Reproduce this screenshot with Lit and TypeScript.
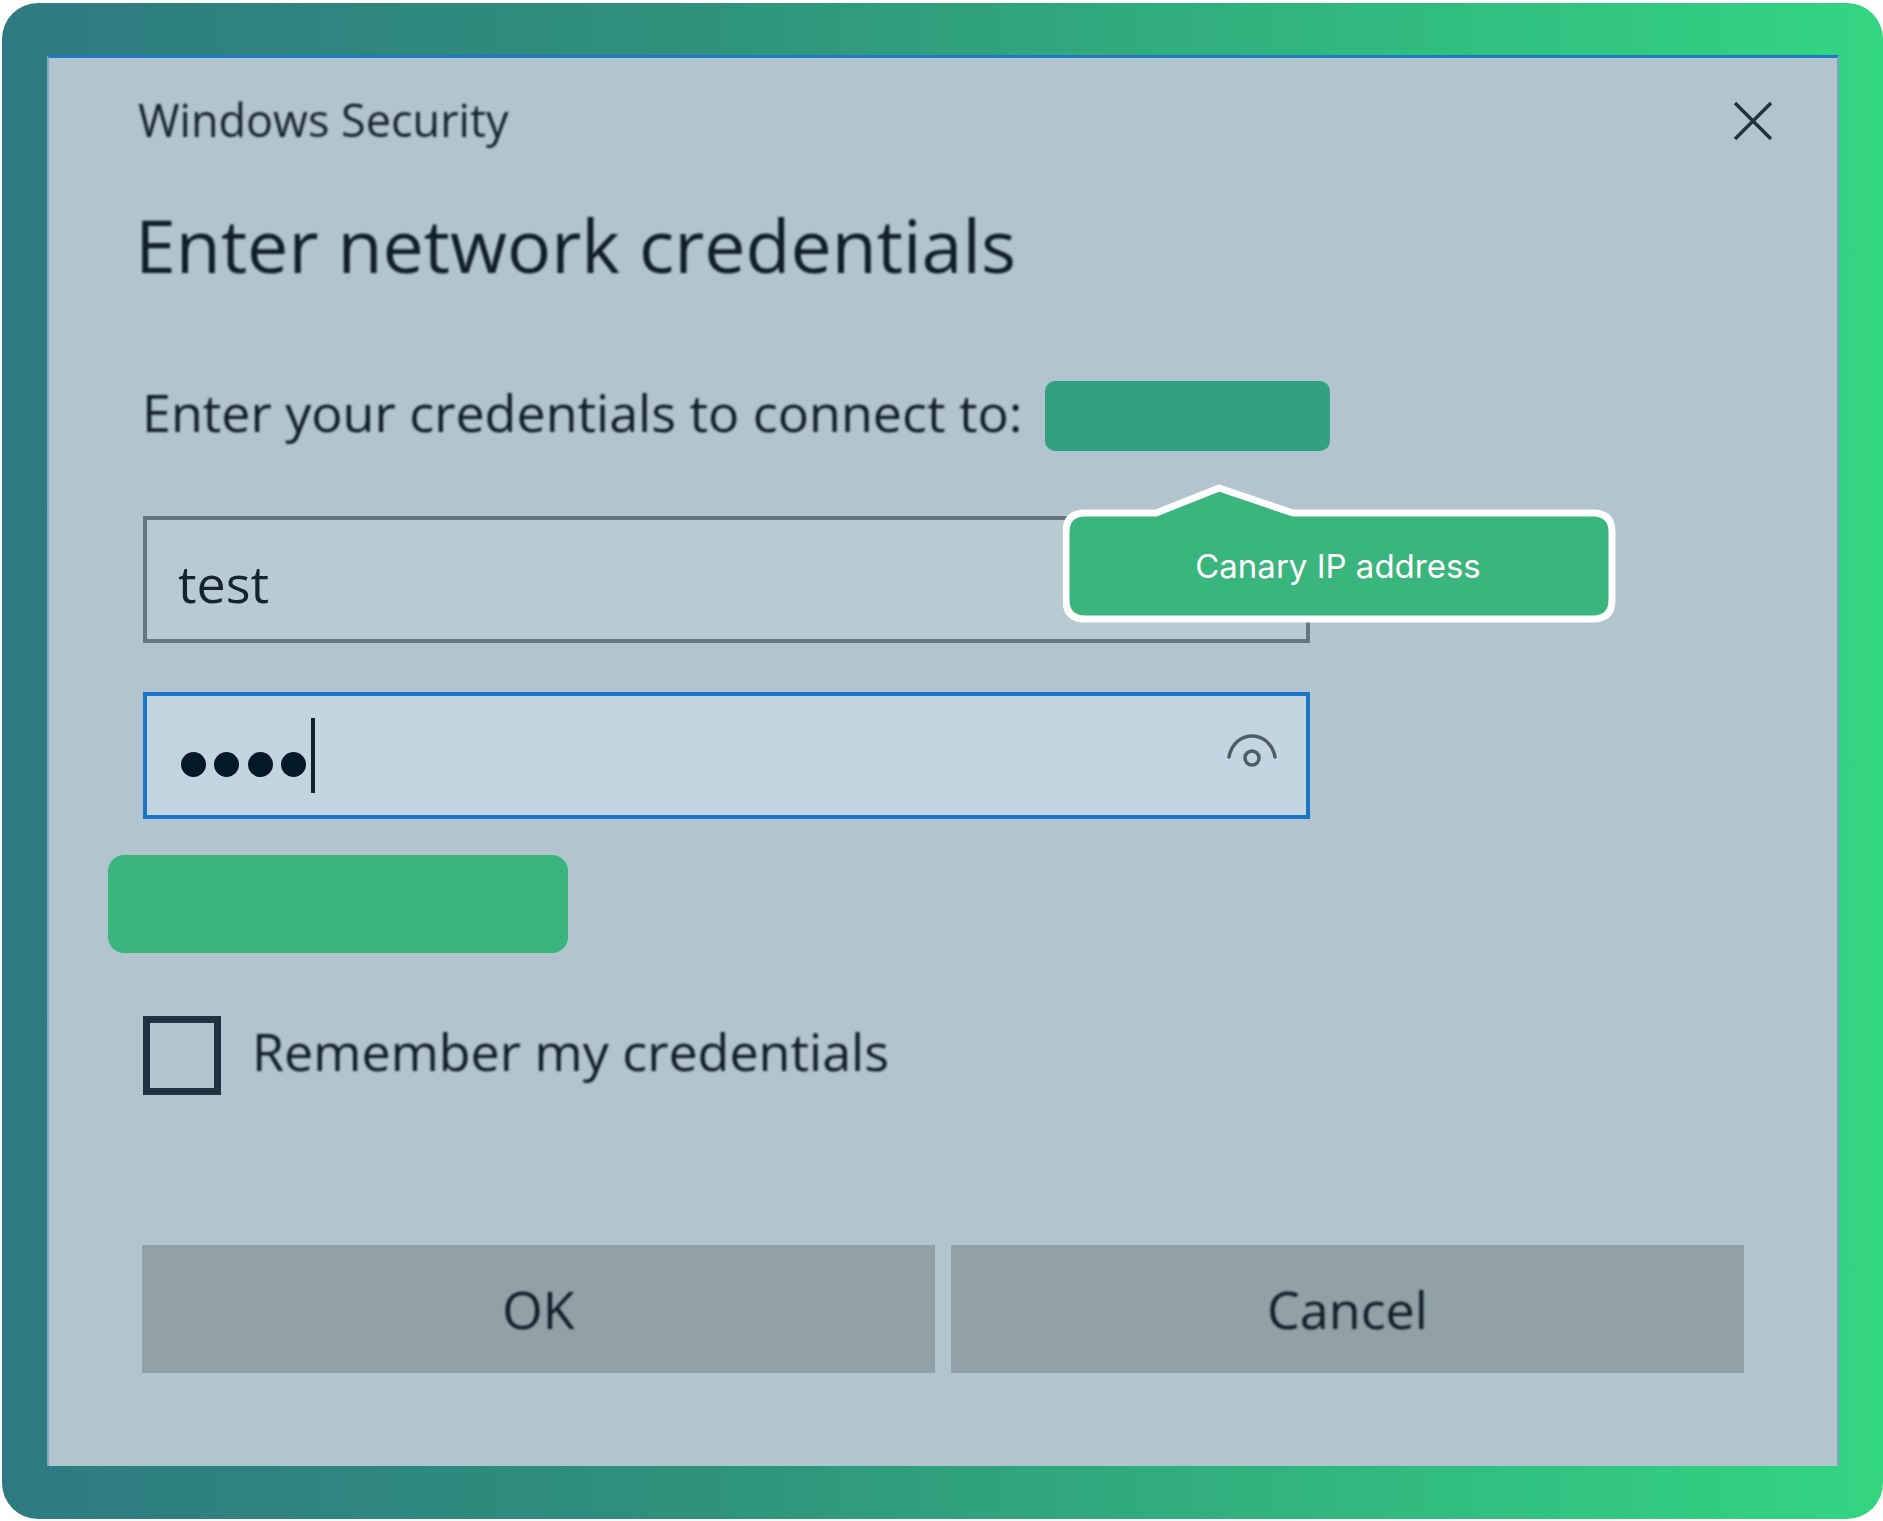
import { LitElement, html, css } from "lit";
import { customElement } from "lit/decorators.js";

@customElement("app-root")
export class AppRoot extends LitElement {
  static styles = css`
    :host { display: block; width: 1883px; height: 1521px; background: #fff; box-sizing: border-box; padding: 3px 0 2px 2px; font-family: "Open Sans", "Noto Sans", sans-serif; color: #15252f; }
    .frame { height: 100%; box-sizing: border-box; border-radius: 36px; padding: 52px 44px 53px 45px; background: linear-gradient(90deg, #2e7a82 0%, #2f907c 35%, #33d681 100%); }
    .win { position: relative; height: 100%; box-sizing: border-box; background: #b2c4ce; border-top: 3px solid #1f78c4; border-left: 2px solid #7da7c6; border-right: 2px solid #7da7c6; padding: 0 92px 0 94px; display: flex; flex-direction: column; }
    .title-row { display: flex; justify-content: space-between; align-items: center; height: 124px; }
    .win-title { font-size: 45px; margin-left: -5px; margin-bottom: 2px; filter: blur(.8px); }
    .close { width: 44px; height: 44px; margin-right: -30px; margin-top: 2px; color: #22333e; filter: blur(.6px); }
    h1 { margin: 18px 0 0 -8px; font-weight: 400; font-size: 73.5px; line-height: 90px; color: #0f1f29; filter: blur(.8px); }
    .prompt-row { display: flex; align-items: center; height: 70px; margin-top: 91px; }
    .prompt { font-size: 52px; filter: blur(.8px); width: 902px; white-space: nowrap; margin-bottom: 10px; text-indent: -1px; color: #0f1f29; }
    .red1 { width: 285px; height: 70px; background: #31a181; border-radius: 10px; }
    .inputs { width: 1167px; margin-top: 65px; display: flex; flex-direction: column; gap: 49px; }
    .input { height: 127px; box-sizing: border-box; display: flex; align-items: center; position: relative; }
    .input.user { background: #b8cbd2; border: 4px solid #66767f; font-size: 52px; padding-left: 31px; padding-top: 5px; }
    .input.user span { filter: blur(.7px); }
    .input.pass { background: #c3d5e0; border: 4px solid #1a75c4; gap: 8.5px; padding-left: 33.5px; }
    .dot { width: 25px; height: 25px; border-radius: 50%; background: #051a27; margin-top: 17px; filter: blur(.5px); }
    .caret { width: 4px; height: 75px; background: #10222e; margin-left: -4px; }
    .eye { position: absolute; right: 27px; top: 36px; width: 54px; height: 46px; color: #4e5d66; filter: blur(.7px); }
    .red2 { width: 460px; height: 98px; margin: 36px 0 0 -35px; background: #3bb57e; border-radius: 16px; }
    .remember { display: flex; align-items: center; gap: 32px; margin-top: 62px; font-size: 52px; }
    .box { width: 64px; height: 65px; border: 7px solid #1f3340; flex: none; filter: blur(.5px); }
    .remember span { filter: blur(.8px); margin-bottom: 10px; text-indent: -1px; color: #0f1f29; }
    .buttons { display: flex; gap: 16px; margin-top: auto; margin-bottom: 93px; margin-left: -1px; }
    .btn { width: 793px; height: 128px; background: #90a2a8; display: flex; align-items: center; justify-content: center; font-size: 52px; }
    .btn span { filter: blur(.8px); margin-bottom: 2px; color: #0f1f29; }
    .callout { position: absolute; left: 1014px; top: 426px; width: 554px; height: 140px; }
    .callout svg { position: absolute; inset: 0; width: 100%; height: 100%; }
    .callout div { position: absolute; left: 0; right: 4px; top: 26px; height: 111px; display: flex; align-items: center; justify-content: center; color: #fff; font-family: Inter, "Liberation Sans", sans-serif; font-size: 33px; }
  `;

  render() {
    return html`
      <div class="frame">
        <div class="win">
          <div class="title-row">
            <span class="win-title">Windows Security</span>
            <svg class="close" viewBox="0 0 44 44"><path d="M4 4 L40 40 M40 4 L4 40" stroke="currentColor" stroke-width="3.5" fill="none"/></svg>
          </div>
          <h1>Enter network credentials</h1>
          <div class="prompt-row">
            <span class="prompt">Enter your credentials to connect to:</span>
            <div class="red1"></div>
          </div>
          <div class="inputs">
            <div class="input user"><span>test</span></div>
            <div class="input pass">
              <i class="dot"></i><i class="dot"></i><i class="dot"></i><i class="dot"></i><i class="caret"></i>
              <svg class="eye" viewBox="0 0 54 46" fill="none" stroke="currentColor" stroke-width="3.5">
                <path d="M4 25 C9 -3 45 -3 50 25" stroke-linecap="round"/>
                <circle cx="27" cy="26" r="7"/>
              </svg>
            </div>
          </div>
          <div class="red2"></div>
          <div class="remember"><i class="box"></i><span>Remember my credentials</span></div>
          <div class="buttons">
            <div class="btn"><span>OK</span></div>
            <div class="btn"><span>Cancel</span></div>
          </div>
          <div class="callout">
            <svg viewBox="0 0 554 140">
              <path d="M24 29 H93 L156 4 L230 29 H530 Q549 29 549 48 V116 Q549 135 530 135 H22 Q3 135 3 116 V48 Q3 29 22 29 Z" fill="#3bb57e" stroke="#fff" stroke-width="7" stroke-linejoin="round"/>
            </svg>
            <div>Canary IP address</div>
          </div>
        </div>
      </div>
    `;
  }
}
